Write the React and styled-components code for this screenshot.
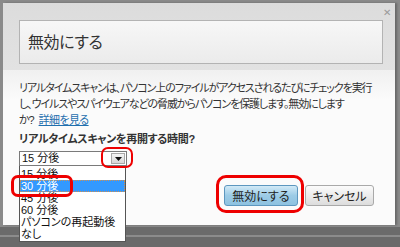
import styled, { createGlobalStyle } from "styled-components";

// "disable real-time scan" dialog, with the annotated dropdown open

const GlobalStyle = createGlobalStyle`
    html, body {
        margin: 0;
        padding: 0;
    }
    body {
        width: 400px;
        height: 247px;
        overflow: hidden;
        background: #6c6c6c;
        font-family: "Liberation Sans", "Noto Sans CJK JP", sans-serif;
    }
`

const Screen = styled.div`
    width: 400px;
    height: 247px;
    display: flex;
    flex-direction: column;
    background: #8a8a8a;
`

const Frame = styled.div`
    padding: 3px 5px 0 3px;
    display: flex;
`

const Dialog = styled.div`
    position: relative;
    width: 392px;
    min-width: 0;
    height: 222px;
    display: flex;
    flex-direction: column;
    background: #fbfbfb;
    box-shadow: inset 0 0 0 1px #d2d2d2, 2px 0 2px rgba(0, 0, 0, 0.25);
`

const Header = styled.div`
    height: 67px;
    box-sizing: border-box;
    padding: 17px 12px 6px 16px;
    background: linear-gradient(#dcdcdc, #e2e2e2);
`

const TitleBox = styled.div`
    height: 44px;
    box-sizing: border-box;
    display: flex;
    align-items: center;
    padding: 0 0 2px 8px;
    border: 1px solid #b3b3b3;
    background: linear-gradient(#f7f7f7, #ebebeb);
    font-size: 16px;
    letter-spacing: -0.4px;
    color: #333;
    font-feature-settings: "palt";
`

const Close = styled.div`
    position: absolute;
    top: 5px;
    right: 4px;
    font-size: 10px;
    line-height: 10px;
    color: #9a9a9a;
`

const Body = styled.div`
    padding: 10px 16px 0 16px;
    background: linear-gradient(#f0f0f0, #fbfbfb 30px);
    flex: 1;
    display: flex;
    flex-direction: column;
`

const Text = styled.p`
    margin: 0;
    font-size: 11px;
    line-height: 16px;
    color: #333;
    white-space: nowrap;
    font-feature-settings: "palt";
    letter-spacing: -1.1px;
`

const Link = styled.a`
    color: #1f6fae;
    text-decoration: underline;
    margin-left: 5px;
    letter-spacing: -0.6px;
`

const Label = styled.div`
    margin-top: 3px;
    font-size: 11px;
    line-height: 16px;
    font-weight: bold;
    color: #333;
    font-feature-settings: "palt";
    letter-spacing: -0.3px;
`

const SelectWrap = styled.div`
    position: relative;
    margin-top: 4px;
    width: 108px;
`

const SelectBox = styled.div`
    height: 15px;
    box-sizing: border-box;
    display: flex;
    align-items: center;
    justify-content: space-between;
    padding: 0 1px 0 2px;
    border: 1px solid #7a7a7a;
    background: #fff;
    font-size: 11px;
    line-height: 13px;
    color: #111;
`

const ArrowButton = styled.div`
    width: 14px;
    height: 11px;
    box-sizing: border-box;
    display: flex;
    align-items: center;
    justify-content: center;
    border: 1px solid #a8a8a8;
    background: linear-gradient(#f4f4f4, #d8d8d8);
`

const List = styled.ul`
    position: absolute;
    left: 0;
    top: 15px;
    width: 107px;
    margin: 0;
    padding: 2px 0 1px;
    box-sizing: border-box;
    list-style: none;
    background: #fff;
    border: 1px solid #555;
    border-top: none;
`

const Item = styled.li`
    height: 12px;
    line-height: 12px;
    padding-left: 1px;
    font-size: 11px;
    color: ${props => props.$active ? "#fff" : "#111"};
    background: ${props => props.$active ? "#3399ff" : "transparent"};
    outline: ${props => props.$active ? "1px dotted #d09050" : "none"};
    outline-offset: -1px;
    white-space: nowrap;
    overflow: hidden;
    font-feature-settings: "palt";
`

const Marker = styled.div`
    position: absolute;
    border: ${props => props.$thin ? 2 : 3}px solid #ee0000;
    border-radius: ${props => props.$r}px;
    box-sizing: border-box;
    pointer-events: none;
`

const Buttons = styled.div`
    margin-top: 19px;
    padding-right: 5px;
    display: flex;
    justify-content: flex-end;
    gap: 7px;
`

const ButtonSlot = styled.div`
    position: relative;
`

const Button = styled.div`
    width: ${props => props.$w}px;
    height: 21px;
    box-sizing: border-box;
    display: flex;
    align-items: center;
    justify-content: center;
    border-radius: 3px;
    font-size: 12px;
    color: #222;
    font-feature-settings: "palt";
    border: 1px solid ${props => props.$primary ? "#5d97bf" : "#a9a9a9"};
    background: ${props => props.$primary
        ? "linear-gradient(#d2eaf7, #9ccbe6 50%, #8ec2e0)"
        : "linear-gradient(#fbfbfb, #ececec 50%, #dcdcdc)"};
`

const Band = styled.div`
    flex: 1;
    margin-top: 2px;
    background: linear-gradient(#6b6b6b 0 8px, #8c8c8c 8px 10px, #6a6a6a 10px);
`

const options = ["15 分後", "30 分後", "45 分後", "60 分後", "パソコンの再起動後", "なし"]

const App = () => {
    return (
        <>
            <GlobalStyle />
            <Screen>
                <Frame>
                    <Dialog>
                        <Close>✕</Close>
                        <Header>
                            <TitleBox>無効にする</TitleBox>
                        </Header>
                        <Body>
                            <Text>
                                リアルタイムスキャンは、パソコン上のファイルがアクセスされるたびにチェックを実行<br />
                                し、ウイルスやスパイウェアなどの脅威からパソコンを保護します。無効にします<br />
                                か?<Link>詳細を見る</Link>
                            </Text>
                            <Label>リアルタイムスキャンを再開する時間?</Label>
                            <SelectWrap>
                                <SelectBox>
                                    15 分後
                                    <ArrowButton>
                                        <svg width="7" height="4" viewBox="0 0 7 4">
                                            <path d="M0 0h7L3.5 4z" fill="#111" />
                                        </svg>
                                    </ArrowButton>
                                </SelectBox>
                                <List>
                                    {options.map((o, i) => (
                                        <Item key={o} $active={i === 1}>{o}</Item>
                                    ))}
                                </List>
                                <Marker $thin $r={7} style={{ left: 82, top: -4, width: 32, height: 21 }} />
                                <Marker $r={7} style={{ left: -8, top: 24, width: 62, height: 22 }} />
                            </SelectWrap>
                            <Buttons>
                                <ButtonSlot>
                                    <Button $primary $w={74}>無効にする</Button>
                                    <Marker $r={10} style={{ left: -8, top: -10, width: 88, height: 38 }} />
                                </ButtonSlot>
                                <Button $w={69}>キャンセル</Button>
                            </Buttons>
                        </Body>
                    </Dialog>
                </Frame>
                <Band />
            </Screen>
        </>
    );
}

export default App;
